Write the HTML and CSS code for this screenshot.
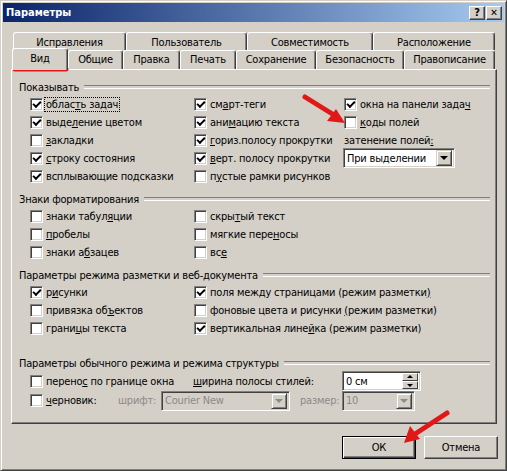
FILE: index.html
```html
<!DOCTYPE html>
<html>
<head>
    <title>Параметры</title>
    <link rel="stylesheet" href="styles.css">
</head>
<body>
<div class="window">
    <div class="titlebar">
        <span class="title">Параметры</span>
        <div class="caption-btns">
            <span class="cap-btn">?</span>
            <span class="cap-btn close">✕</span>
        </div>
    </div>

    <div class="tabs">
        <div class="tab-row back">
            <div class="tab" style="width: 113px">Исправления</div>
            <div class="tab" style="width: 121px">Пользователь</div>
            <div class="tab" style="width: 126px">Совместимость</div>
            <div class="tab" style="width: 122px">Расположение</div>
        </div>
        <div class="tab-row front">
            <div class="tab active" style="width: 56px">Вид</div>
            <div class="tab" style="width: 55px">Общие</div>
            <div class="tab" style="width: 57px">Правка</div>
            <div class="tab" style="width: 56px">Печать</div>
            <div class="tab" style="width: 80px">Сохранение</div>
            <div class="tab" style="width: 88px">Безопасность</div>
            <div class="tab" style="width: 91px">Правописание</div>
        </div>
    </div>

    <div class="panel">
        <!-- Показывать -->
        <div class="section">
            <div class="sect-title"><span>Показывать</span></div>
            <div class="grid">
                <label class="cbl"><span class="cb on"></span><span class="focus">облас<u>т</u>ь задач</span></label>
                <label class="cbl"><span class="cb on"></span><span>см<u>а</u>рт-теги</span></label>
                <label class="cbl"><span class="cb on"></span><span>окна на панели зада<u>ч</u></span></label>

                <label class="cbl"><span class="cb on"></span><span>выде<u>л</u>ение цветом</span></label>
                <label class="cbl"><span class="cb on"></span><span>ани<u>м</u>ацию текста</span></label>
                <label class="cbl"><span class="cb"></span><span><u>к</u>оды полей</span></label>

                <label class="cbl"><span class="cb"></span><span><u>з</u>акладки</span></label>
                <label class="cbl"><span class="cb on"></span><span><u>г</u>ориз.полосу прокрутки</span></label>
                <span class="plain">затенение полей<u>:</u></span>

                <label class="cbl"><span class="cb on"></span><span><u>с</u>троку состояния</span></label>
                <label class="cbl"><span class="cb on"></span><span><u>в</u>ерт. полосу прокрутки</span></label>
                <div class="combo shade"><span class="combo-text">При выделении</span><span class="drop"></span></div>

                <label class="cbl"><span class="cb on"></span><span>всплывающие подсказки</span></label>
                <label class="cbl"><span class="cb"></span><span>п<u>у</u>стые рамки рисунков</span></label>
            </div>
        </div>

        <!-- Знаки форматирования -->
        <div class="section">
            <div class="sect-title"><span>Знаки форматирования</span></div>
            <div class="grid">
                <label class="cbl"><span class="cb"></span><span>знаки табул<u>я</u>ции</span></label>
                <label class="cbl"><span class="cb"></span><span>скры<u>т</u>ый текст</span></label>
                <span></span>

                <label class="cbl"><span class="cb"></span><span><u>п</u>робелы</span></label>
                <label class="cbl"><span class="cb"></span><span>мягкие пере<u>н</u>осы</span></label>
                <span></span>

                <label class="cbl"><span class="cb"></span><span>знаки а<u>б</u>зацев</span></label>
                <label class="cbl"><span class="cb"></span><span>вс<u>е</u></span></label>
            </div>
        </div>

        <!-- Параметры режима разметки -->
        <div class="section">
            <div class="sect-title"><span>Параметры режима разметки и веб-документа</span></div>
            <div class="grid">
                <label class="cbl"><span class="cb on"></span><span>р<u>и</u>сунки</span></label>
                <label class="cbl wide"><span class="cb on"></span><span>поля между страницами (режим разметки<u>)</u></span></label>

                <label class="cbl"><span class="cb"></span><span>привязка об<u>ъ</u>ектов</span></label>
                <label class="cbl wide"><span class="cb"></span><span>фоновые цвета и рисунки <u>(</u>режим разметки)</span></label>

                <label class="cbl"><span class="cb"></span><span>грани<u>ц</u>ы текста</span></label>
                <label class="cbl wide"><span class="cb on"></span><span>вертикальная лине<u>й</u>ка (режим разметки)</span></label>
            </div>
        </div>

        <!-- Параметры обычного режима -->
        <div class="section last">
            <div class="sect-title"><span>Параметры обычного режима и режима структуры</span></div>
            <div class="line-row first">
                <label class="cbl" style="width: 163px"><span class="cb"></span><span>перено<u>с</u> по границе окна</span></label>
                <span class="plain" style="width: 149px"><u>ш</u>ирина полосы стилей:</span>
                <div class="spin">
                    <span class="combo-text">0 см</span>
                    <span class="spin-btns"><span class="sb up"></span><span class="sb down"></span></span>
                </div>
            </div>
            <div class="line-row">
                <label class="cbl" style="width: 88px"><span class="cb"></span><span><u>ч</u>ерновик:</span></label>
                <span class="plain disabled" style="width: 43px">шрифт:</span>
                <div class="combo disabled" style="width: 129px"><span class="combo-text">Courier New</span><span class="drop"></span></div>
                <span class="plain disabled" style="width: 42px; margin-left: 10px">размер:</span>
                <div class="combo disabled" style="width: 73px"><span class="combo-text">10</span><span class="drop"></span></div>
            </div>
        </div>
    </div>

    <div class="buttons">
        <span class="btn default">ОК</span>
        <span class="btn">Отмена</span>
    </div>
</div>

<!-- красные пометки поверх окна -->
<svg class="marks" width="507" height="471" viewBox="0 0 507 471">
    <line x1="15" y1="69" x2="66" y2="69" stroke="#e01818" stroke-width="5" stroke-linecap="round"/>
    <line x1="305" y1="97" x2="334" y2="115" stroke="#e01818" stroke-width="5" stroke-linecap="round"/>
    <polygon points="345,123 327,121 336,109" fill="#e01818"/>
    <line x1="447" y1="413" x2="415" y2="434" stroke="#e01818" stroke-width="5" stroke-linecap="round"/>
    <polygon points="404,443 410,426 420,439" fill="#e01818"/>
</svg>
</body>
</html>
```

FILE: styles.css
```css
/* классический диалог Windows */
* {
    box-sizing: border-box;
}

body {
    margin: 0;
    position: relative;
    font-family: Tahoma, "DejaVu Sans", sans-serif;
    font-stretch: condensed;
    font-size: 11px;
    letter-spacing: -0.2px;
    color: #000;
    background: #fff;
}

.window {
    width: 507px;
    height: 471px;
    padding: 2px;
    background: #d4d0c8;
    border: 1px solid;
    border-color: #d4d0c8 #404040 #404040 #d4d0c8;
    box-shadow: inset 1px 1px #fff, inset -1px -1px #808080;
}

.titlebar {
    height: 19px;
    display: flex;
    align-items: center;
    justify-content: space-between;
    padding: 0 2px 0 3px;
    background: linear-gradient(to right, #0a246a, #a6caf0);
}

.title {
    color: #fff;
    font-weight: bold;
    letter-spacing: 0;
}

.caption-btns {
    display: flex;
    gap: 1px;
}

.cap-btn {
    width: 16px;
    height: 14px;
    display: flex;
    align-items: center;
    justify-content: center;
    background: #d4d0c8;
    border: 1px solid;
    border-color: #fff #404040 #404040 #fff;
    box-shadow: inset -1px -1px #808080;
    font-weight: bold;
    font-size: 11px;
    line-height: 1;
}

.cap-btn.close {
    font-size: 10px;
}

/* вкладки */
.tabs {
    margin-top: 10px;
}

.tab-row {
    display: flex;
}

.tab-row.back {
    height: 18px;
    margin-left: 10px;
}

.tab-row.front {
    height: 19px;
    margin-left: 9px;
}

.tab {
    display: flex;
    align-items: center;
    justify-content: center;
    background: #d4d0c8;
    border-left: 1px solid #fff;
    border-top: 1px solid #fff;
    border-right: 1px solid #404040;
    border-radius: 3px 3px 0 0;
    box-shadow: inset -1px 0 #808080;
    padding-bottom: 1px;
}

.tab-row.back .tab {
    padding-bottom: 0;
    padding-top: 1px;
}

.tab.active {
    position: relative;
    z-index: 2;
    margin-top: -2px;
    height: 22px;
    padding-bottom: 3px;
}

/* панель */
.panel {
    margin-left: 8px;
    width: 486px;
    height: 355px;
    padding: 10px 6px 0 7px;
    border: 1px solid;
    border-color: #fff #404040 #404040 #fff;
    box-shadow: inset -1px -1px #808080;
}

.section {
    margin-bottom: 7px;
}

.section.last {
    margin-top: 19px;
}

.sect-title {
    display: flex;
    align-items: center;
    height: 14px;
    margin-bottom: 1px;
}

.sect-title::after {
    content: "";
    flex: 1;
    height: 2px;
    margin-left: 5px;
    border-top: 1px solid #808080;
    border-bottom: 1px solid #fff;
}

.grid {
    display: grid;
    grid-template-columns: 164px 150px 1fr;
    grid-auto-rows: 18px;
    padding-left: 11px;
    align-items: center;
}

.cbl {
    display: flex;
    align-items: center;
    white-space: nowrap;
}

.cbl.wide {
    grid-column: 2 / 4;
}

.cb {
    width: 13px;
    height: 13px;
    flex: none;
    margin-right: 3px;
    position: relative;
    background: #fff;
    border: 1px solid;
    border-color: #808080 #fff #fff #808080;
    box-shadow: inset 1px 1px #404040, inset -1px -1px #d4d0c8;
}

.cb.on::after {
    content: "";
    position: absolute;
    left: 2px;
    top: 2px;
    width: 6px;
    height: 3px;
    border-left: 2px solid #000;
    border-bottom: 2px solid #000;
    transform: rotate(-45deg);
}

.focus {
    outline: 1px dotted #000;
    padding: 0 1px;
    margin-left: -1px;
}

.plain {
    white-space: nowrap;
}

.disabled {
    color: #8c8a86;
}

/* выпадающие списки */
.combo, .spin {
    display: flex;
    align-items: center;
    justify-content: space-between;
    height: 20px;
    background: #fff;
    border: 1px solid;
    border-color: #808080 #fff #fff #808080;
    box-shadow: inset 1px 1px #404040, inset -1px -1px #d4d0c8;
    padding: 2px;
}

.combo.shade {
    width: 112px;
    margin-left: -1px;
}

.combo.disabled {
    background: #d4d0c8;
}

.combo-text {
    padding-left: 1px;
}

.drop {
    width: 16px;
    height: 16px;
    position: relative;
    background: #d4d0c8;
    border: 1px solid;
    border-color: #d4d0c8 #404040 #404040 #d4d0c8;
    box-shadow: inset 1px 1px #fff, inset -1px -1px #808080;
}

.drop::after {
    content: "";
    position: absolute;
    left: 3px;
    top: 5px;
    border-left: 4px solid transparent;
    border-right: 4px solid transparent;
    border-top: 4px solid #000;
}

.combo.disabled .drop::after {
    border-top-color: #8c8a86;
}

.spin {
    width: 79px;
}

.spin-btns {
    display: flex;
    flex-direction: column;
    height: 16px;
}

.sb {
    width: 16px;
    height: 8px;
    position: relative;
    background: #d4d0c8;
    border: 1px solid;
    border-color: #fff #404040 #404040 #fff;
}

.sb::after {
    content: "";
    position: absolute;
    left: 4px;
    border-left: 3px solid transparent;
    border-right: 3px solid transparent;
}

.sb.up::after {
    top: 1px;
    border-bottom: 3px solid #000;
}

.sb.down::after {
    top: 2px;
    border-top: 3px solid #000;
}

.line-row {
    display: flex;
    align-items: center;
    height: 19px;
    padding-left: 11px;
}

.line-row.first {
    height: 20px;
    margin-top: 1px;
}

/* кнопки */
.buttons {
    display: flex;
    justify-content: flex-end;
    gap: 8px;
    margin-top: 12px;
    padding-right: 6px;
}

.btn {
    width: 74px;
    height: 23px;
    display: flex;
    align-items: center;
    justify-content: center;
    background: #d4d0c8;
    border: 1px solid;
    border-color: #fff #404040 #404040 #fff;
    box-shadow: inset -1px -1px #808080;
}

.btn.default {
    border: 1px solid #000;
    box-shadow: inset 1px 1px #fff, inset -1px -1px #404040, inset -2px -2px #808080;
}

.marks {
    position: absolute;
    top: 0;
    left: 0;
    pointer-events: none;
}
```
